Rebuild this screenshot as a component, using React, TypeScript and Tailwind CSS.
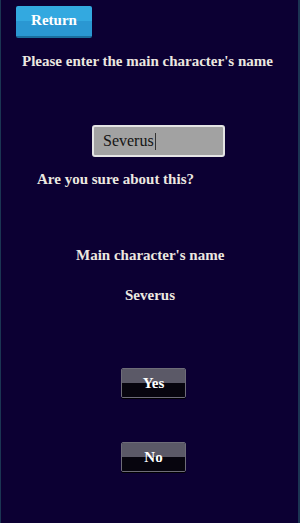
const serif = { fontFamily: '"Liberation Serif", "DejaVu Serif", serif' };

function DarkButton({ label }: { label: string }) {
  return (
    <button
      className="relative flex h-[30px] w-[65px] flex-col overflow-hidden rounded-[2px] border border-[#6e6c78] shadow-[0_1px_0_#000]"
      style={serif}
    >
      <span className="h-1/2 w-full bg-[#5b5967]" />
      <span className="h-1/2 w-full bg-[#07050e]" />
      <span className="absolute inset-0 flex items-center justify-center text-[15px] font-bold text-white">
        {label}
      </span>
    </button>
  );
}

export default function App() {
  const name = "Severus";

  return (
    <div
      className="flex h-[523px] w-[300px] flex-col border-l border-r-2 border-[#1b3553] bg-[#0c0033] text-[#ece8e0]"
      style={serif}
    >
      <div className="pl-[15px] pt-[6px]">
        <button className="relative flex h-[32px] w-[76px] flex-col overflow-hidden rounded-[2px] border-b-2 border-[#1a6e9e]">
          <span className="h-[15px] w-full bg-[#33a9e0]" />
          <span className="flex-1 w-full bg-[#2a97d2]" />
          <span className="absolute inset-0 flex items-center justify-center pb-[2px] text-[15px] font-bold text-white">
            Return
          </span>
        </button>
      </div>

      <p className="mt-[14px] pl-[21px] text-[15px] font-bold leading-[18px]">
        Please enter the main character's name
      </p>

      <div className="mt-[55px] flex pl-[91px]">
        <div className="flex h-[32px] w-[133px] items-center rounded-[3px] border-2 border-[#e4e4e4] bg-[#a2a2a2] px-[9px]">
          <span className="text-[16px] leading-none text-[#141414]">{name}</span>
          <span className="ml-[1px] h-[17px] w-px bg-[#333]" />
        </div>
      </div>

      <p className="mt-[13px] pl-[36px] text-[15px] font-bold leading-[18px]">Are you sure about this?</p>

      <p className="mt-[58px] pl-[75px] text-[15px] font-bold leading-[18px]">Main character's name</p>

      <p className="mt-[22px] pl-[124px] text-[15px] font-bold leading-[18px]">{name}</p>

      <div className="mt-[64px] flex pl-[120px]">
        <DarkButton label="Yes" />
      </div>

      <div className="mt-[44px] flex pl-[120px]">
        <DarkButton label="No" />
      </div>
    </div>
  );
}
